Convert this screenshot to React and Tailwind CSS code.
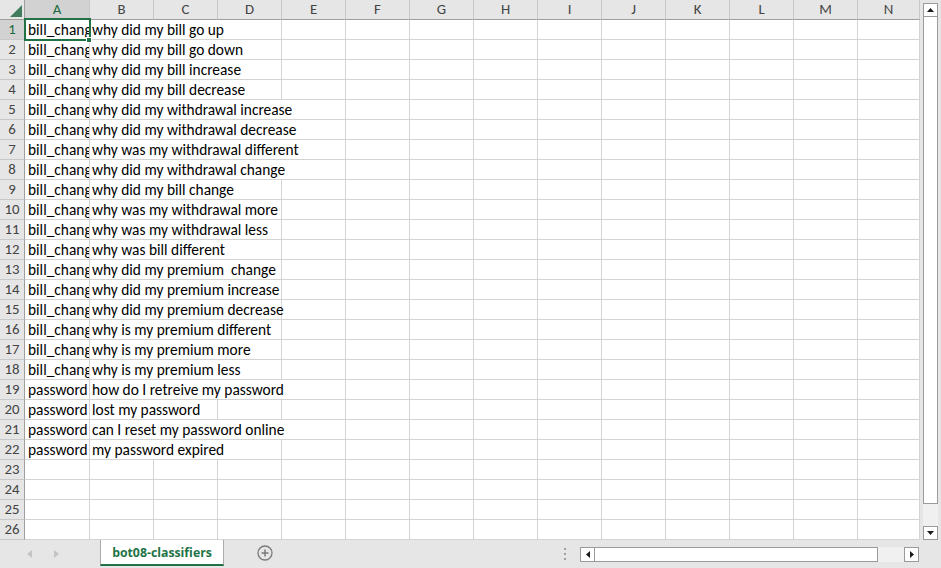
import React from "react";

const COLS = ["A","B","C","D","E","F","G","H","I","J","K","L","M","N"];
const WIDTHS = [65,64,64,64,64,64,64,64,64,64,64,64,64,62];

const DATA = [
  ["bill_change","why did my bill go up",3],
  ["bill_change","why did my bill go down",3],
  ["bill_change","why did my bill increase",3],
  ["bill_change","why did my bill decrease",3],
  ["bill_change","why did my withdrawal increase",4],
  ["bill_change","why did my withdrawal decrease",4],
  ["bill_change","why was my withdrawal different",4],
  ["bill_change","why did my withdrawal change",4],
  ["bill_change","why did my bill change",3],
  ["bill_change","why was my withdrawal more",3],
  ["bill_change","why was my withdrawal less",3],
  ["bill_change","why was bill different",3],
  ["bill_change","why did my premium\u00a0 change",3],
  ["bill_change","why did my premium increase",3],
  ["bill_change","why did my premium decrease",3],
  ["bill_change","why is my premium different",3],
  ["bill_change","why is my premium more",3],
  ["bill_change","why is my premium less",3],
  ["password","how do I retreive my password",4],
  ["password","lost my password",2],
  ["password","can I reset my password online",4],
  ["password","my password expired",3],
];

const cellFont = { fontFamily: "Carlito, Lato, 'Liberation Sans', sans-serif" };

function Row({ n, a, b, span }) {
  const cells = [];
  cells.push(
    <div key="A" className="h-full w-[65px] shrink-0 border-r border-b border-[#d4d4d4] overflow-hidden whitespace-nowrap pl-[3px]">
      {a}
    </div>
  );
  if (b) {
    const w = WIDTHS.slice(1, 1 + span).reduce((s, x) => s + x, 0);
    cells.push(
      <div key="B" style={{ width: w }} className="h-full shrink-0 border-r border-b border-[#d4d4d4] whitespace-nowrap pl-[2px]">
        {b}
      </div>
    );
    for (let i = 1 + span; i < COLS.length; i++) {
      cells.push(<div key={i} style={{ width: WIDTHS[i] }} className="h-full shrink-0 border-r border-b border-[#d4d4d4]" />);
    }
  } else {
    for (let i = 1; i < COLS.length; i++) {
      cells.push(<div key={i} style={{ width: WIDTHS[i] }} className="h-full shrink-0 border-r border-b border-[#d4d4d4]" />);
    }
  }
  const sel = n === 1;
  return (
    <div className="flex h-[20px] text-[15.4px] leading-[19px] text-black" style={cellFont}>
      <div className={`w-[25px] shrink-0 h-full border-r border-b border-r-[#9e9e9e] border-b-[#c8c8c8] text-center text-[14.8px] ${sel ? "bg-[#d2d2d2] text-[#1e6b41]" : "bg-[#e6e6e6] text-[#444]"}`}>
        {n}
      </div>
      {cells}
    </div>
  );
}

export default function App() {
  const rows = [];
  for (let i = 1; i <= 26; i++) {
    const d = DATA[i - 1];
    rows.push(<Row key={i} n={i} a={d ? d[0] : ""} b={d ? d[1] : ""} span={d ? d[2] : 1} />);
  }
  return (
    <div className="w-[941px] h-[568px] bg-white flex flex-col overflow-hidden select-none">
      <div className="flex h-[540px]">
        {/* grid */}
        <div className="relative w-[920px] h-full overflow-hidden">
          <div className="flex h-[20px] bg-[#e6e6e6] text-[#444] text-[14.8px] leading-[19px]" style={cellFont}>
            <div className="w-[25px] shrink-0 h-full border-r border-b border-r-[#9e9e9e] border-b-[#9e9e9e] relative">
              <svg className="absolute left-[10px] top-[5px]" width="13" height="12" viewBox="0 0 13 12">
                <polygon points="12,0 12,12 0,12" fill="#3f7d5c" />
              </svg>
            </div>
            {COLS.map((c, i) => (
              <div
                key={c}
                style={{ width: WIDTHS[i] }}
                className={`shrink-0 h-full border-r border-b border-r-[#c8c8c8] border-b-[#9e9e9e] text-center ${i === 0 ? "bg-[#d2d2d2] text-[#1e6b41]" : ""}`}
              >
                {c}
              </div>
            ))}
          </div>
          {rows}
          {/* selection box */}
          <div className="absolute left-[24px] top-[18px] w-[67px] h-[23px] border-2 border-[#217346] pointer-events-none" />
          <div className="absolute left-[86px] top-[37px] w-[6px] h-[6px] bg-[#217346] border border-white" />
        </div>
        {/* vertical scrollbar */}
        <div className="w-[21px] h-full bg-[#e6e6e6] flex flex-col items-start pl-[3px] pt-[3px]">
          <div className="w-[15px] h-[14px] bg-white border border-[#9a9a9a] flex items-center justify-center">
            <svg width="7" height="4" viewBox="0 0 7 4"><polygon points="3.5,0 7,4 0,4" fill="#1a1a1a" /></svg>
          </div>
          <div className="w-[15px] h-[487px] bg-white border border-[#9a9a9a] border-t-0" />
          <div className="w-[15px] flex-1 bg-[#f0f0f0]" />
          <div className="w-[15px] h-[14px] bg-white border border-[#9a9a9a] flex items-center justify-center">
            <svg width="7" height="4" viewBox="0 0 7 4"><polygon points="0,0 7,0 3.5,4" fill="#1a1a1a" /></svg>
          </div>
        </div>
      </div>
      {/* tab bar */}
      <div className="h-[28px] bg-[#e6e6e6] flex items-start relative">
        <div className="w-[100px] h-full flex items-center pl-[27px] gap-[20px]">
          <svg width="5" height="8" viewBox="0 0 5 8"><polygon points="5,0 5,8 0,4" fill="#c4c4c4" /></svg>
          <svg width="5" height="8" viewBox="0 0 5 8" className="ml-[2px]"><polygon points="0,0 0,8 5,4" fill="#c4c4c4" /></svg>
        </div>
        <div className="w-[124px] h-[26px] bg-white border-l border-r border-[#ababab] border-b-2 border-b-[#217346] flex items-center justify-center text-[#217346] font-bold text-[12.3px] pt-[3px]" style={{ fontFamily: "'Open Sans', 'Noto Sans', sans-serif" }}>
          bot08-classifiers
        </div>
        <div className="ml-[33px] h-full flex items-center pb-[2px]">
          <svg width="16" height="16" viewBox="0 0 16 16">
            <circle cx="8" cy="8" r="7" fill="none" stroke="#7a7a7a" strokeWidth="1.3" />
            <line x1="8" y1="4.5" x2="8" y2="11.5" stroke="#7a7a7a" strokeWidth="1.5" />
            <line x1="4.5" y1="8" x2="11.5" y2="8" stroke="#7a7a7a" strokeWidth="1.5" />
          </svg>
        </div>
        <div className="ml-auto mr-[22px] h-full flex items-start pt-[7px]">
          <div className="flex flex-col gap-[3px] pt-[1px] mr-[14px]">
            <div className="w-[2px] h-[2px] bg-[#a0a0a0]" />
            <div className="w-[2px] h-[2px] bg-[#a0a0a0]" />
            <div className="w-[2px] h-[2px] bg-[#a0a0a0]" />
          </div>
          <div className="w-[15px] h-[15px] bg-white border border-[#9a9a9a] flex items-center justify-center">
            <svg width="4" height="7" viewBox="0 0 4 7"><polygon points="4,0 4,7 0,3.5" fill="#1a1a1a" /></svg>
          </div>
          <div className="w-[283px] h-[15px] bg-white border border-[#9a9a9a] border-l-0" />
          <div className="w-[26px] h-[15px] bg-[#f0f0f0]" />
          <div className="w-[15px] h-[15px] bg-white border border-[#9a9a9a] flex items-center justify-center">
            <svg width="4" height="7" viewBox="0 0 4 7"><polygon points="0,0 0,7 4,3.5" fill="#1a1a1a" /></svg>
          </div>
        </div>
      </div>
    </div>
  );
}
